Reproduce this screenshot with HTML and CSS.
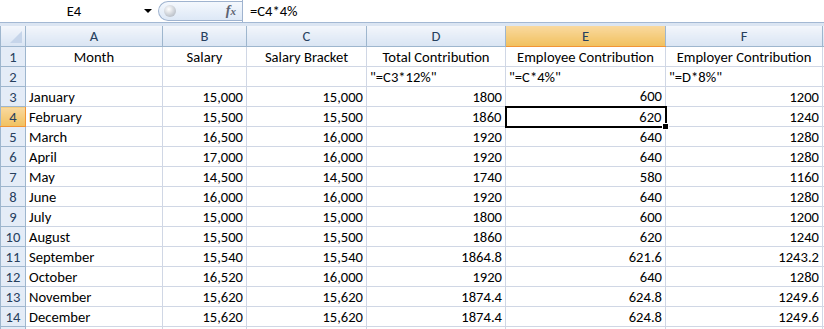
FILE: index.html
```html
<!DOCTYPE html>
<html lang="en">
<head>
<meta charset="utf-8">
<title>Salary Contribution</title>
<link rel="stylesheet" href="styles.css">
</head>
<body>
<div class="fbar">
 <div class="namebox"><span class="ref">E4</span><span class="drop"></span></div>
 <div class="pill"><span class="knob"></span><span class="fx">f<i>x</i></span></div>
 <div class="formula">=C4*4%</div>
</div>
<div class="band"></div>
<table class="sheet">
 <colgroup>
  <col class="w-rh"><col class="w-a"><col class="w-b"><col class="w-c"><col class="w-d"><col class="w-e"><col class="w-f"><col class="w-g">
 </colgroup>
 <tr class="hdr">
  <th class="corner"><span class="tri"></span></th>
  <th>A</th><th>B</th><th>C</th><th>D</th><th class="sel">E</th><th>F</th><th class="edge"></th>
 </tr>
 <tr><th class="rh">1</th><td class="c">Month</td><td class="c">Salary</td><td class="c">Salary Bracket</td><td class="c">Total Contribution</td><td class="c">Employee Contribution</td><td class="c">Employer Contribution</td><td></td></tr>
 <tr><th class="rh">2</th><td></td><td></td><td></td><td>"=C3*12%"</td><td>"=C*4%"</td><td>"=D*8%"</td><td></td></tr>
 <tr><th class="rh">3</th><td>January</td><td class="n">15,000</td><td class="n">15,000</td><td class="n">1800</td><td class="n">600</td><td class="n">1200</td><td></td></tr>
 <tr><th class="rh sel">4</th><td>February</td><td class="n">15,500</td><td class="n">15,500</td><td class="n">1860</td><td class="n active">620<span class="handle"></span></td><td class="n">1240</td><td></td></tr>
 <tr><th class="rh">5</th><td>March</td><td class="n">16,500</td><td class="n">16,000</td><td class="n">1920</td><td class="n">640</td><td class="n">1280</td><td></td></tr>
 <tr><th class="rh">6</th><td>April</td><td class="n">17,000</td><td class="n">16,000</td><td class="n">1920</td><td class="n">640</td><td class="n">1280</td><td></td></tr>
 <tr><th class="rh">7</th><td>May</td><td class="n">14,500</td><td class="n">14,500</td><td class="n">1740</td><td class="n">580</td><td class="n">1160</td><td></td></tr>
 <tr><th class="rh">8</th><td>June</td><td class="n">16,000</td><td class="n">16,000</td><td class="n">1920</td><td class="n">640</td><td class="n">1280</td><td></td></tr>
 <tr><th class="rh">9</th><td>July</td><td class="n">15,000</td><td class="n">15,000</td><td class="n">1800</td><td class="n">600</td><td class="n">1200</td><td></td></tr>
 <tr><th class="rh">10</th><td>August</td><td class="n">15,500</td><td class="n">15,500</td><td class="n">1860</td><td class="n">620</td><td class="n">1240</td><td></td></tr>
 <tr><th class="rh">11</th><td>September</td><td class="n">15,540</td><td class="n">15,540</td><td class="n">1864.8</td><td class="n">621.6</td><td class="n">1243.2</td><td></td></tr>
 <tr><th class="rh">12</th><td>October</td><td class="n">16,520</td><td class="n">16,000</td><td class="n">1920</td><td class="n">640</td><td class="n">1280</td><td></td></tr>
 <tr><th class="rh">13</th><td>November</td><td class="n">15,620</td><td class="n">15,620</td><td class="n">1874.4</td><td class="n">624.8</td><td class="n">1249.6</td><td></td></tr>
 <tr><th class="rh">14</th><td>December</td><td class="n">15,620</td><td class="n">15,620</td><td class="n">1874.4</td><td class="n">624.8</td><td class="n">1249.6</td><td></td></tr>
 <tr class="tail"><th class="rh"></th><td></td><td></td><td></td><td></td><td></td><td></td><td></td></tr>
</table>
</body>
</html>
```

FILE: styles.css
```css
body { margin: 0; background: #ffffff; overflow: hidden;
       font-family: "Carlito", "Lato", "Liberation Sans", sans-serif; font-size: 14.6px; color: #000000; }

/* formula bar */
.fbar { display: flex; height: 22px; border-bottom: 1px solid #a3b8d3; background: #ffffff; }
.namebox { width: 158px; display: flex; align-items: center; }
.namebox .ref { flex: 1; text-align: center; padding-left: 4px; }
.namebox .drop { width: 0; height: 0; border-left: 4px solid transparent; border-right: 4px solid transparent;
                 border-top: 4px solid #000000; margin-right: 6px; }
.pill { width: 84px; height: 20px; margin-top: 1px; display: flex; align-items: center; justify-content: space-between;
        border: 1px solid #9fb3cf; border-right: none; border-radius: 11px 0 0 11px;
        background: linear-gradient(#f4f8fd, #dde8f6); box-sizing: border-box; }
.knob { width: 12px; height: 12px; border-radius: 50%; margin-left: 5px;
        background: radial-gradient(circle at 40% 35%, #ffffff, #c7ccd3 60%, #a7aeb8); }
.fx { font-family: "Liberation Serif", serif; font-style: italic; font-weight: bold; font-size: 14px; color: #5c6270;
      margin-right: 6px; }
.fx i { font-size: 11px; }
.formula { flex: 1; border-left: 1px solid #9fb3cf; padding-left: 7px; line-height: 22px; }
.band { height: 3px; background: #dbe5f2; }

/* grid */
.sheet { border-collapse: collapse; table-layout: fixed; width: 826px; }
.w-rh { width: 25px; } .w-a { width: 137px; } .w-b { width: 84px; } .w-c { width: 120px; }
.w-d { width: 139px; } .w-e { width: 160px; } .w-f { width: 157px; } .w-g { width: 4px; }
.sheet tr { height: 20px; }
.sheet td { border: 1px solid #d0d7e5; padding: 0 3px; white-space: nowrap; overflow: visible; line-height: 18px; }
.sheet td.c { text-align: center; }
.sheet td.n { text-align: right; }
.sheet th { font-weight: normal; color: #27405e; border: 1px solid #9eb6ce; padding: 0;
            background: linear-gradient(#f3f6fb, #e4ecf7 55%, #dae5f3); line-height: 18px; }
.sheet .hdr th { height: 20px; border-top: none; }
.sheet th.rh { background: #e4ecf7; text-align: center; }
.sheet th.sel { background: linear-gradient(#f9d99f, #f1c15f); border-bottom-color: #f29436; }
.sheet th.rh.sel { background: linear-gradient(#f9d99f, #f1c15f); border-right-color: #f29436; }
.sheet th.edge { border-right: none; }
.corner { position: relative; background: #dbe5f3; }
.corner .tri { position: absolute; right: 3px; bottom: 3px; width: 0; height: 0;
               border-left: 12px solid transparent; border-bottom: 12px solid #c6d5ea; }
.sheet td.active { border: 2px solid #000000; position: relative; }
.handle { position: absolute; right: -4px; bottom: -4px; width: 5px; height: 5px; background: #000000;
          border: 1px solid #ffffff; }
```
